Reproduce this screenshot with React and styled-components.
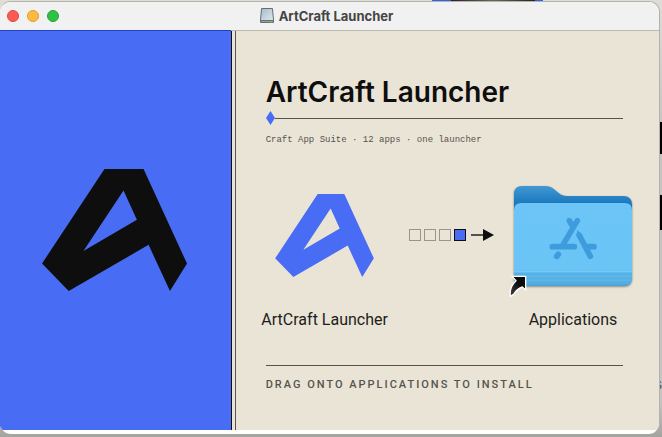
import React from "react";
import styled, { createGlobalStyle } from "styled-components";

const App = () => {
  return (
    <Desktop>
      <GlobalStyle />
      <Backdrop aria-hidden="true">
        <Strip />
        <Blot $top="122px" $height="32px" />
        <Blot $top="195px" $height="35px" />
        <Stray>s</Stray>
      </Backdrop>

      <Window>
        <TitleBar>
          <Lights>
            <Light type="button" aria-label="Close" $bg="#fb5b53" $edge="#dd4840" />
            <Light type="button" aria-label="Minimize" $bg="#fdb940" $edge="#dd9c34" />
            <Light type="button" aria-label="Zoom" $bg="#2ec144" $edge="#25a336" />
          </Lights>
          <WindowTitle>
            <DiskIcon />
            ArtCraft Launcher
          </WindowTitle>
        </TitleBar>

        <Body>
          <Brand>
            <Mark width="145" height="122" color="#0e0e0e" />
          </Brand>
          <Rail />
          <Content>
            <Title>ArtCraft Launcher</Title>
            <Divider>
              <Diamond viewBox="0 0 9 14">
                <path d="M4.5 0 9 7 4.5 14 0 7Z" fill="#486df4" />
              </Diamond>
              <Line />
            </Divider>
            <Caption>Craft App Suite · 12 apps · one launcher</Caption>

            <Install>
              <Item>
                <Art>
                  <Mark width="99" height="83" color="#486df4" />
                </Art>
                <Name>ArtCraft Launcher</Name>
              </Item>
              <Steps>
                <Step />
                <Step />
                <Step />
                <Step $active />
                <Arrow viewBox="0 0 24 12">
                  <path d="M0 6H14" stroke="#55534e" strokeWidth="2" />
                  <path d="M12 0 23 6 12 12Z" fill="#0e0e0e" />
                </Arrow>
              </Steps>
              <Item>
                <Art>
                  <Folder />
                </Art>
                <Name>Applications</Name>
              </Item>
            </Install>

            <Line />
            <Hint>Drag onto Applications to install</Hint>
          </Content>
        </Body>
      </Window>
    </Desktop>
  );
};

export default App;

const Mark = ({ width, height, color }) => (
  <svg width={width} height={height} viewBox="38 42 434 365">
    <path
      fill={color}
      fillRule="evenodd"
      d="M225 42H342L472 325 421 407 357 269 118 407 38 325ZM282 106 162 287 322 194Z"
    />
  </svg>
);

const DiskIcon = () => (
  <svg width="16" height="16" viewBox="0 0 16 16">
    <defs>
      <linearGradient id="disk" x1="0" y1="0" x2="1" y2="1">
        <stop offset="0" stopColor="#a9bdcb" />
        <stop offset="1" stopColor="#dbe6ec" />
      </linearGradient>
    </defs>
    <path d="M2 1Q2 0 3 0H13Q14 0 14 1L15 12V14Q15 15 14 15H2Q1 15 1 14V12Z" fill="#696c6f" />
    <path d="M3 1H13L14 12H2Z" fill="url(#disk)" />
    <path d="M2 13.500H14" stroke="#9b9d9f" />
    <path d="M11 14H13" stroke="#37dd50" />
  </svg>
);

const Folder = () => (
  <svg width="134" height="124" viewBox="18 -6 402 372">
    <defs>
      <linearGradient id="back" x1="0" y1="0" x2="0" y2="1">
        <stop offset="0" stopColor="#3f99d3" />
        <stop offset="0.17" stopColor="#1d78be" />
        <stop offset="1" stopColor="#1d78be" />
      </linearGradient>
      <linearGradient id="front" x1="0" y1="0" x2="0" y2="1">
        <stop offset="0" stopColor="#6cc5f6" />
        <stop offset="0.8" stopColor="#6ac4f6" />
        <stop offset="0.84" stopColor="#62bbee" />
        <stop offset="1" stopColor="#4fa9de" />
      </linearGradient>
      <linearGradient id="badge" x1="0" y1="1" x2="1" y2="0">
        <stop offset="0" stopColor="#444" />
        <stop offset="0.6" stopColor="#0b0b0b" />
      </linearGradient>
      <filter id="shade" x="-10%" y="-10%" width="120%" height="120%">
        <feDropShadow dx="0" dy="3" stdDeviation="3" floodOpacity="0.45" />
      </filter>
    </defs>
    <path
      filter="url(#shade)"
      fill="url(#back)"
      d="M42 57Q42 33 66 33H138C166 33 172 63 200 63H370Q396 63 396 89V308Q396 332 372 332H66Q42 332 42 308Z"
    />
    <path
      fill="url(#front)"
      d="M42 106Q42 84 64 84H374Q396 84 396 106V308Q396 332 372 332H66Q42 332 42 308Z"
    />
    <path d="M42 289H396" stroke="#7accf6" strokeWidth="3" />
    <path d="M42 297H396M42 312H396" stroke="#4ba6da" strokeWidth="3" />
    <path d="M42 315H396" stroke="#65bcea" strokeWidth="3" />
    <g stroke="#3e9bdc" strokeWidth="17" strokeLinecap="round" fill="none">
      <path d="M208 137 219 155M232 137 188 211M157 215H223M259 215H282M238 181 271 244M175 238 170 244" />
    </g>
    <path d="M232 165 229 181 236 194 246 181Z" fill="#3e9bdc" />
    <path
      fill="url(#badge)"
      stroke="#fff"
      strokeWidth="4"
      strokeLinejoin="round"
      d="M36 304H77V345L67 336Q50 342 41 358L31 364Q27 337 48 317Z"
    />
  </svg>
);

const GlobalStyle = createGlobalStyle`
  * {
    box-sizing: border-box;
  }

  body {
    margin: 0;
    font-family: Inter, "Liberation Sans", sans-serif;
    color: #0e0e0e;
  }

  svg {
    display: block;
    flex-shrink: 0;
  }
`;

const Desktop = styled.div`
  position: relative;
  display: flex;
  min-height: 100vh;
  padding: 1px 2px 3px 0;
  overflow: hidden;
  background: linear-gradient(#deded6, #c4c4c4 30%, #c4c4c4 92%, #a3a3a0);
`;

const Backdrop = styled.div`
  position: absolute;
  inset: 0;
`;

const Strip = styled.div`
  position: absolute;
  top: 0;
  left: 432px;
  width: 111px;
  height: 2px;
  background: linear-gradient(
    90deg,
    #2f62e4 17%,
    #25231f 17%,
    #6d675c 55%,
    #25231f 93%,
    #2f62e4 93%
  );
`;

const Blot = styled.div`
  position: absolute;
  top: ${({ $top }) => $top};
  right: 0;
  width: 3px;
  height: ${({ $height }) => $height};
  background: #000;
`;

const Stray = styled.span`
  position: absolute;
  top: 376px;
  right: 0;
  font-size: 13px;
  color: #555;
`;

const Window = styled.main`
  position: relative;
  flex: 1;
  display: flex;
  flex-direction: column;
  padding-bottom: 4px;
  overflow: hidden;
  border: solid #b3b3ad;
  border-width: 1px 1px 0 0;
  border-radius: 11px;
  background: #fff;
`;

const TitleBar = styled.header`
  display: grid;
  grid-template-columns: 1fr auto 1fr;
  align-items: center;
  height: 29px;
  padding: 0 14px 0 7px;
  background: #f1f1f1;
  border-bottom: 1px solid #bcb9ad;
`;

const Lights = styled.div`
  display: flex;
  gap: 8px;
`;

const Light = styled.button`
  width: 12px;
  height: 12px;
  padding: 0;
  border: 1px solid ${({ $edge }) => $edge};
  border-radius: 50%;
  background: ${({ $bg }) => $bg};
`;

const WindowTitle = styled.div`
  display: flex;
  align-items: center;
  gap: 4px;
  font-size: 13px;
  line-height: 16px;
  font-weight: 700;
  color: #454545;
`;

const Body = styled.div`
  flex: 1;
  display: flex;
`;

const Brand = styled.aside`
  flex: 0 0 35%;
  display: flex;
  align-items: center;
  justify-content: center;
  padding: 0 1px 1px 0;
  background: #486df4;
  box-shadow: 0 -1px #1f43c8;
`;

const Rail = styled.div`
  flex: 0 0 5px;
  border-left: 1px solid #0e0e0e;
  border-right: 1px solid #55534e;
  background: #eae4d7;
`;

const Content = styled.section`
  flex: 1;
  padding: 42px 36px 36px 30px;
  background: #eae4d7;
`;

const Title = styled.h1`
  margin: 0;
  font-size: 28px;
  line-height: 38px;
  font-weight: 600;
  white-space: nowrap;
`;

const Divider = styled.div`
  display: flex;
  align-items: center;
  height: 14px;
`;

const Diamond = styled.svg`
  width: 9px;
  height: 14px;
`;

const Line = styled.div`
  flex: 1;
  height: 1px;
  background: #55534e;
`;

const Caption = styled.p`
  margin: 9px 0 0;
  font-family: "Liberation Mono", monospace;
  font-size: 9px;
  line-height: 12px;
  color: #55534e;
`;

const Install = styled.div`
  display: flex;
  align-items: flex-start;
  justify-content: space-between;
  margin: 27px -17px 35px -8px;
`;

const Item = styled.div`
  width: 134px;
`;

const Art = styled.div`
  display: flex;
  align-items: center;
  justify-content: center;
  height: 124px;
`;

const Name = styled.div`
  margin-top: 13px;
  font-family: Roboto, "Liberation Sans", sans-serif;
  font-size: 16px;
  line-height: 20px;
  text-align: center;
  white-space: nowrap;
  color: #1d1d1b;
`;

const Steps = styled.div`
  display: flex;
  align-items: center;
  gap: 3px;
  height: 124px;
  padding-left: 6px;
`;

const Step = styled.span`
  width: 12px;
  height: 12px;
  border: 1px solid ${({ $active }) => ($active ? "#0e0e0e" : "#9a958b")};
  background: ${({ $active }) => ($active ? "#486df4" : "transparent")};
`;

const Arrow = styled.svg`
  width: 24px;
  height: 12px;
  margin-left: 2px;
`;

const Hint = styled.p`
  margin: 11px 0 0;
  font-family: Roboto, "Liberation Sans", sans-serif;
  font-size: 11px;
  line-height: 16px;
  font-weight: 500;
  letter-spacing: 2px;
  text-transform: uppercase;
  white-space: nowrap;
  color: #55534e;
`;
